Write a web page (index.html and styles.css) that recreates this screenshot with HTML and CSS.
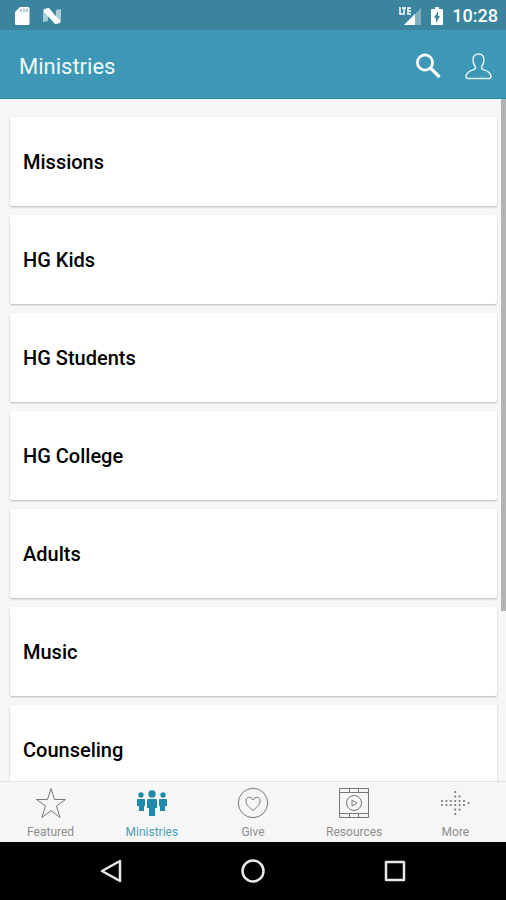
FILE: index.html
```html
<!DOCTYPE html>
<html lang="en">
<head>
    <meta charset="UTF-8">
    <meta name="viewport" content="width=device-width, initial-scale=1.0">
    <title>Ministries</title>
    <link rel="stylesheet" href="styles.css">
</head>
<body>
    <!-- Status Bar -->
    <div class="status-bar">
        <div class="status-group">
            <svg width="16" height="20" viewBox="0 0 16 20">
                <path fill="#fff" d="M6 1h8q1.500 0 1.500 1.500v15q0 1.500-1.500 1.500H2.500Q1 19 1 17.500V6z"/>
                <path stroke="#8fb9c6" stroke-width="1.500" d="M7 3v3M10 3v3M13 3v3"/>
            </svg>
            <svg width="20" height="20" viewBox="0 0 20 20">
                <path fill="#a9cbd6" d="M1 4l5-2v13l-5 1zM14 4l5-1v13l-5 2z"/>
                <path fill="#fff" d="M2 3l5-1 11 13v2l-5 1L2 6z"/>
            </svg>
        </div>
        <div class="status-group right">
            <svg width="24" height="20" viewBox="0 0 24 20">
                <path fill="#7fb0c0" d="M23 2v17H6z"/>
                <path fill="#fff" d="M17 8v11H6z"/>
                <path fill="#3a859d" d="M0 0h14v10H0z"/>
                <path fill="none" stroke="#fff" stroke-width="1.500" d="M2 1v7h3M4 2h4M6 2v7M13 2h-3v6h3M10 5h3"/>
            </svg>
            <svg width="12" height="20" viewBox="0 0 12 20">
                <path fill="#fff" d="M4 1h4v2h3q1 0 1 1v14q0 1-1 1H1q-1 0-1-1V4q0-1 1-1h3z"/>
                <path fill="#3a859d" d="M7 5v5h2l-4 7v-5H3z"/>
            </svg>
            <span class="clock">10:28</span>
        </div>
    </div>

    <!-- Header -->
    <header class="header">
        <h1>Ministries</h1>
        <div class="header-actions">
            <button class="icon-btn" aria-label="Search">
                <svg width="28" height="28" viewBox="0 0 28 28" fill="none" stroke="#fff">
                    <circle cx="11" cy="10.500" r="7.600" stroke-width="2.800"/>
                    <path stroke-width="3.200" d="M16 15.500l9.500 9.500"/>
                </svg>
            </button>
            <button class="icon-btn" aria-label="Profile">
                <svg width="28" height="28" viewBox="0 0 28 28" fill="none" stroke="#e4f3f8" stroke-width="1.500" stroke-linejoin="round">
                    <path d="M14.500 2C11 2 8.700 4.500 9 8c.1 3 .8 4.800 2.300 6.500v2.200C9 18.700 2.500 18.500 2 24.500c0 1.300.6 2 1.800 2h21.400c1.200 0 1.800-.7 1.800-2-.5-6-7-5.800-9.300-7.800v-2.200C19.200 12.800 19.900 11 20 8c.3-3.500-2-6-5.500-6z"/>
                </svg>
            </button>
        </div>
    </header>

    <!-- Ministry List -->
    <main class="content">
        <div class="ministry-list">
            <a class="ministry-card" href="#">Missions</a>
            <a class="ministry-card" href="#">HG Kids</a>
            <a class="ministry-card" href="#">HG Students</a>
            <a class="ministry-card" href="#">HG College</a>
            <a class="ministry-card" href="#">Adults</a>
            <a class="ministry-card" href="#">Music</a>
            <a class="ministry-card" href="#">Counseling</a>
        </div>
        <span class="scroll-thumb"></span>
    </main>

    <!-- Tab Bar -->
    <nav class="tab-bar">
        <a class="tab" href="#">
            <svg width="32" height="32" viewBox="0 0 32 32" fill="none" stroke="#777" stroke-width="1">
                <path d="M16 1.500l3.500 11H30.500l-9 6.500 3.500 11.500-9-7-9 7 3.500-11.500-9-6.500h11z"/>
            </svg>
            <span>Featured</span>
        </a>
        <a class="tab active" href="#">
            <svg width="32" height="32" viewBox="0 0 32 32" fill="#2089a9">
                <circle cx="16" cy="7" r="3.700"/>
                <path d="M12 12h8q1 0 1 1v8h-2v8h-6v-8h-2v-8q0-1 1-1z"/>
                <circle cx="5" cy="8" r="2.700"/>
                <path d="M2 12h6q1 0 1 1v6H8v5H3v-5H1v-6q0-1 1-1z"/>
                <circle cx="27" cy="8" r="2.700"/>
                <path d="M24 12h6q1 0 1 1v6h-2v5h-5v-5h-1v-6q0-1 1-1z"/>
            </svg>
            <span>Ministries</span>
        </a>
        <a class="tab" href="#">
            <svg width="32" height="32" viewBox="0 0 32 32" fill="none" stroke="#777" stroke-width="1">
                <circle cx="16" cy="16" r="14.700"/>
                <path d="M16 23.500c-3-3-7-5-7-9.500 0-4.500 5-5 7-1 2-4 7-3.500 7 1 0 4.500-4 6.500-7 9.500z"/>
            </svg>
            <span>Give</span>
        </a>
        <a class="tab" href="#">
            <svg width="32" height="32" viewBox="0 0 32 32" fill="none" stroke="#777" stroke-width="1">
                <path d="M1.500 1.500h29v29h-29zM1.500 5.500h29M1.500 26.500h29M11.500 1.500v4M20.500 1.500v4M11.500 26.500v4M20.500 26.500v4"/>
                <circle cx="16" cy="16" r="7.500"/>
                <path d="M14 13v6l5-3z"/>
            </svg>
            <span>Resources</span>
        </a>
        <a class="tab" href="#">
            <svg width="32" height="32" viewBox="0 0 32 32" fill="none" stroke="#777" stroke-width="2.200" stroke-linecap="round">
                <path stroke-dasharray="0 4.400" d="M3 14h23M3 18h23M16.200 9.500h5M16.200 22.500h5"/>
                <path d="M16.200 5v0M16.200 27v0M29.500 16v0"/>
            </svg>
            <span>More</span>
        </a>
    </nav>

    <!-- System Navigation -->
    <div class="system-nav">
        <button class="system-btn" aria-label="Back">
            <svg width="28" height="28" viewBox="0 0 28 28" fill="none" stroke="#e8e8e8" stroke-width="2.500" stroke-linejoin="round">
                <path d="M23 4v20L5 14z"/>
            </svg>
        </button>
        <button class="system-btn" aria-label="Home">
            <svg width="28" height="28" viewBox="0 0 28 28" fill="none" stroke="#e8e8e8" stroke-width="2.500">
                <circle cx="14" cy="14" r="10.500"/>
            </svg>
        </button>
        <button class="system-btn" aria-label="Recent apps">
            <svg width="28" height="28" viewBox="0 0 28 28" fill="none" stroke="#e8e8e8" stroke-width="2.500" stroke-linejoin="round">
                <path d="M5 5h18v18H5z"/>
            </svg>
        </button>
    </div>
</body>
</html>
```
FILE: styles.css
```css
/* Reset CSS */
* {
    margin: 0;
    padding: 0;
    box-sizing: border-box;
}

body {
    display: flex;
    flex-direction: column;
    height: 100vh;
    overflow: hidden;
    font-family: Roboto, sans-serif;
    background-color: #f6f6f6;
    color: #111;
}

a {
    color: inherit;
    text-decoration: none;
}

button {
    border: none;
    background: none;
    cursor: pointer;
}

svg {
    display: block;
}

/* Status Bar */
.status-bar {
    display: flex;
    flex-shrink: 0;
    justify-content: space-between;
    align-items: center;
    height: 30px;
    padding: 1px 8px 0 14px;
    background-color: #3a859d;
}

.status-group {
    display: flex;
    align-items: center;
    gap: 12px;
}

.status-group.right {
    gap: 9px;
}

.clock {
    font-size: 18px;
    font-weight: 500;
    line-height: 30px;
    color: #fff;
}

/* Header */
.header {
    display: flex;
    flex-shrink: 0;
    justify-content: space-between;
    align-items: center;
    height: 69px;
    padding: 4px 14px 0 19px;
    background-color: #3e98b5;
    border-bottom: 1px solid #2587a6;
}

.header h1 {
    font-size: 22px;
    font-weight: 400;
    color: #f0f9fc;
}

.header-actions {
    display: flex;
    gap: 22px;
}

/* Ministry List */
.content {
    position: relative;
    flex: 1;
    min-height: 0;
    overflow: hidden;
}

.ministry-list {
    display: flex;
    flex-direction: column;
    gap: 9px;
    padding: 18px 9px 0 10px;
}

.ministry-card {
    display: flex;
    flex-shrink: 0;
    align-items: center;
    height: 89px;
    padding: 0 13px;
    background: #fff;
    border-radius: 2px;
    box-shadow: 0 1px 2px rgba(0, 0, 0, 0.25);
    font-size: 20px;
    font-weight: 500;
    color: #000;
}

.scroll-thumb {
    position: absolute;
    top: 0;
    right: 0;
    width: 5px;
    height: 75%;
    background: #b3b3b3;
}

/* Tab Bar */
.tab-bar {
    display: flex;
    flex-shrink: 0;
    height: 61px;
    padding-top: 5px;
    background-color: #f6f6f6;
    border-top: 1px solid #e4e4e4;
}

.tab {
    display: flex;
    flex: 1;
    flex-direction: column;
    align-items: center;
    gap: 5px;
    font-size: 12px;
    line-height: 16px;
    color: #8f8f8f;
}

.tab.active {
    color: #4a9fba;
}

/* System Navigation */
.system-nav {
    display: flex;
    flex-shrink: 0;
    height: 58px;
    padding: 0 40px;
    background: #000;
}

.system-btn {
    display: flex;
    flex: 1;
    justify-content: center;
    align-items: center;
}
```
